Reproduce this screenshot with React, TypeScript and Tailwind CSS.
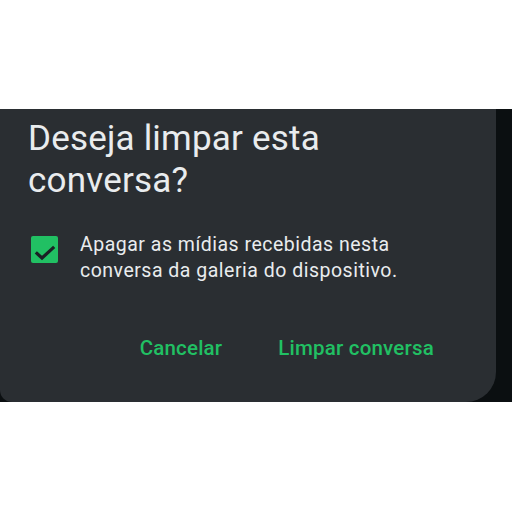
const CheckMark = () => (
  <svg viewBox="0 0 27 27" className="w-[27px] h-[27px]">
    <path d="M6 17.5 L11 22 L22 12" fill="none" stroke="#1b2024" strokeWidth={3.2} strokeLinecap="square" />
  </svg>
)

const App = () => {
  return (
    <div className="w-[512px] h-[512px] bg-white pt-[109px] font-['Roboto',sans-serif]">
      <div className="flex h-[293px] bg-[#0b0f11]">
        <div className="flex-1 flex flex-col bg-[#2a2e32] rounded-br-[30px] rounded-bl-[12px] pl-[28px] pr-[40px]">
          <h1 className="mt-[9px] text-[35px] leading-[42px] text-[#e9ecee] tracking-[0.2px]">
            Deseja limpar esta conversa?
          </h1>

          <div className="mt-[30px] flex items-start">
            <div className="mt-[4px] ml-[3px] w-[27px] h-[27px] shrink-0 rounded-[2px] bg-[#21c063]">
              <CheckMark />
            </div>
            <p className="ml-[22px] w-[340px] text-[19.5px] leading-[26px] tracking-[0.5px] text-[#e9ecee]">
              Apagar as mídias recebidas nesta conversa da galeria do dispositivo.
            </p>
          </div>

          <div className="mt-[49px] flex justify-end gap-[56px] pr-[22px] text-[20.5px] tracking-[0.2px] font-medium text-[#21c063]">
            <button>Cancelar</button>
            <button>Limpar conversa</button>
          </div>
        </div>
        <div className="w-[16px]" />
      </div>
    </div>
  )
}

export default App
